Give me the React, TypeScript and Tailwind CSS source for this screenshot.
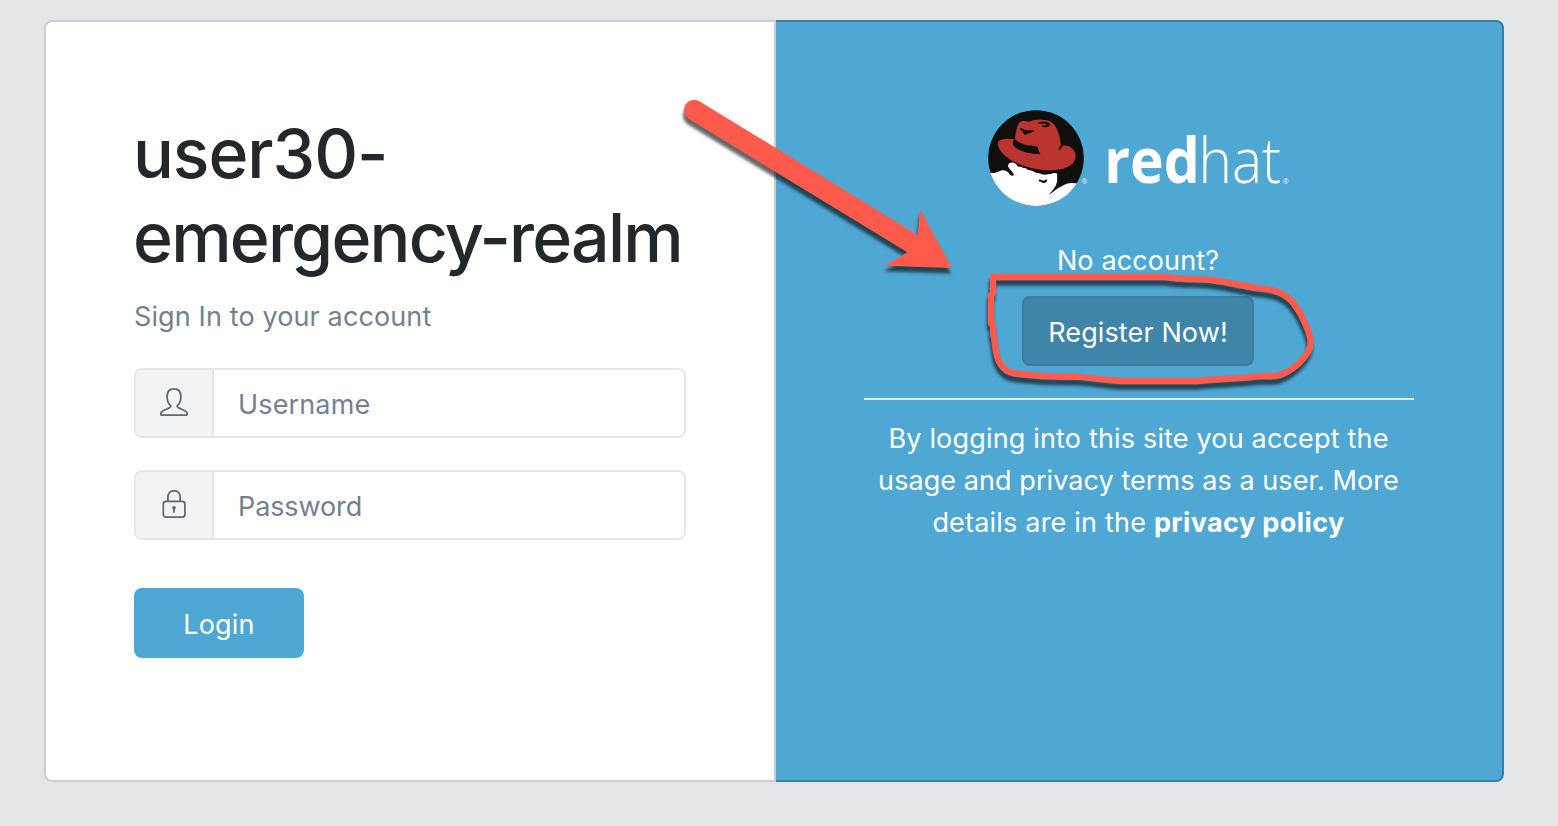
import React from "react";

function ShadowmanLogo() {
  return (
    <svg className="block h-[96px] w-[304px]" viewBox="0 0 304 96" role="img" aria-label="redhat">
      <defs>
        <clipPath id="disc">
          <circle cx="48" cy="48" r="48" />
        </clipPath>
      </defs>
      <circle cx="48" cy="48" r="47.8" fill="#110f0d" />
      <g clipPath="url(#disc)">
        <g transform="translate(-12 -10) scale(0.33333)">
          <path
            d="M36 216C46 222 60 219 70 214C80 208 88 211 97 217C100 224 104 228 112 227C116 222 108 214 101 207C93 198 96 189 105 188C113 186 121 190 124 198C129 203 134 197 140 203L150 205C156 214 166 209 174 215C183 221 190 217 197 223C208 226 218 222 226 222C232 217 239 219 244 221C242 230 245 238 243 246C240 260 232 270 218 284C238 273 242 264 255 260C268 252 276 249 287 249L320 251L320 345L30 345Z"
            fill="#fff"
          />
          <path
            d="M66 127C70 118 88 114 117 118C118 104 121 82 129 69C136 60 149 63 160 65C174 58 194 57 207 60C226 61 238 74 244 91C251 106 253 121 255 138C276 132 297 145 299 166C300 190 276 207 240 210C196 214 149 202 116 186C87 172 62 146 66 127Z"
            fill="#bb342f"
          />
          <path
            d="M115 116C124 124 134 130 147 134C161 138 174 135 184 140C188 145 186 154 194 162C165 163 137 156 120 144C109 136 108 126 115 116Z"
            fill="#110f0d"
          />
          <path d="M255 136C250 140 248 146 248 153C253 147 257 142 262 135Z" fill="#110f0d" />
          <path
            d="M131 84C138 82 142 90 150 90C160 92 169 88 176 94C168 96 165 100 156 101C151 102 149 106 144 104C145 98 135 93 131 84Z"
            fill="#110f0d"
          />
          <path
            d="M183 69C194 64 215 63 221 70C225 78 214 84 203 81C196 80 196 77 200 76C208 78 213 75 210 72C204 69 195 74 183 69Z"
            fill="#110f0d"
          />
          <path
            d="M188 239C192 237 196 240 201 242C206 243 209 237 214 239C214 245 208 249 202 249C197 249 196 244 190 245Z"
            fill="#110f0d"
          />
        </g>
      </g>
      <text x="93.4" y="74" fill="#e3f2f9" fontSize="7" fontFamily="Open Sans, sans-serif">®</text>
      <g fill="#fff" fontFamily="Open Sans, sans-serif" fontSize="62.5">
        <text x="116.2" y="73.2" fontWeight="700" textLength="95.5" lengthAdjust="spacingAndGlyphs">red</text>
        <text x="210.4" y="73.2" fontWeight="300" textLength="82.6" lengthAdjust="spacingAndGlyphs">hat</text>
      </g>
      <text x="295" y="74" fill="#e3f2f9" fontSize="6.5" fontFamily="Open Sans, sans-serif">®</text>
    </svg>
  );
}

function UserIcon() {
  return (
    <svg className="h-7 w-7" viewBox="0 0 28 28" fill="none" stroke="#5c6873" strokeWidth="1.75" strokeLinejoin="round">
      <path d="M10.9 17.9C8.2 15.6 7.1 12.6 7.1 8.4C7.1 3.7 9.8.9 14 .9s6.9 2.8 6.9 7.5c0 4.2-1.1 7.2-3.8 9.5c.3 1.8 2 2.3 4.5 3.3c3.9 1.5 5.5 2.2 5.6 4.2v.7c0 .7-.4 1.1-1.1 1.1H1.9c-.7 0-1.1-.4-1.1-1.1v-.7c.1-2 1.7-2.7 5.6-4.2c2.5-1 4.2-1.5 4.5-3.3Z" />
    </svg>
  );
}

function LockIcon() {
  return (
    <svg className="h-7 w-7" viewBox="0 0 28 28" fill="none" stroke="#5c6873" strokeWidth="1.75">
      <rect x="3.3" y="11.3" width="21.6" height="15.9" rx="2.6" />
      <path d="M7.9 11.3V6.9C7.9 3.2 10.5.8 14 .8s6.1 2.4 6.1 6.1v4.4" />
      <circle cx="14" cy="17.8" r="1.8" fill="#5c6873" stroke="none" />
      <path d="M14 18v4.7" strokeWidth="1.8" />
    </svg>
  );
}

interface FieldProps {
  icon: React.ReactNode;
  label: string;
  type: string;
  tracking: string;
}

function Field({ icon, label, type, tracking }: FieldProps) {
  return (
    <div className="flex h-[70px] overflow-hidden rounded-lg border-2 border-[#e4e7ea]">
      <div className="flex w-[78px] shrink-0 items-center justify-center border-r-2 border-[#e4e7ea] bg-[#f1f3f5] pb-[2px]">
        {icon}
      </div>
      <input
        type={type}
        placeholder={label}
        className={`min-w-0 flex-1 bg-white px-6 pt-1 text-[27px] outline-none placeholder:text-[#73818f] ${tracking}`}
      />
    </div>
  );
}

function Annotations() {
  return (
    <svg className="pointer-events-none absolute left-0 top-0 h-[826px] w-[1558px]" viewBox="0 0 1558 826" aria-hidden="true">
      <defs>
        <filter id="shade" filterUnits="userSpaceOnUse" x="650" y="70" width="700" height="350" colorInterpolationFilters="sRGB">
          <feDropShadow dx="-1" dy="5.5" stdDeviation="1.8" floodColor="#000" floodOpacity="0.6" />
        </filter>
      </defs>
      <g filter="url(#shade)">
        <path
          d="M699.8 101.4L917.7 235L920 209L952 268L885 265.7L907.3 252.3L688.7 118.8A10.2 10.2 0 0 1 699.8 101.4Z"
          fill="#ff5a4c"
        />
      </g>
      <g filter="url(#shade)">
        <g transform="translate(980 240) scale(0.33333)" fill="none" stroke="#ff5a4c" strokeWidth="19" strokeLinejoin="round" strokeLinecap="round">
          <path d="M39 160V111H550C573 111 580 116 603 116C630 118 655 117 692 120C740 125 765 133 792 137C824 146 848 145 877 151C930 163 946 198 961 221C977 253 992 282 992 307C992 329 982 341 970 356C953 376 926 396 899 406C880 412 855 406 825 410C770 418 700 416 651 423H425C380 420 330 413 286 410C255 411 220 409 182 408C150 405 130 404 98 399C60 389 49 352 46 322C43 302 44 292 39 285V255L33 250V165L39 160" />
        </g>
      </g>
    </svg>
  );
}

export default function App() {
  return (
    <div className="relative h-[826px] w-[1558px] overflow-hidden bg-[#e4e5e6] px-[44px] pt-[20px] font-['Inter',sans-serif] text-[27px] leading-[42px] text-[#23282c]">
      <main className="flex h-[762px] w-[1460px]">
        <section className="w-[732px] shrink-0 rounded-l-lg border-2 border-[#c8ced3] bg-white px-[88px] pt-[89px]">
          <h1 className="-ml-px mb-[17px] text-[68px] font-medium leading-[84px]">
            <span className="block tracking-[-1.05px]">user30-</span>
            <span className="block whitespace-nowrap tracking-[-1.8px]">emergency-realm</span>
          </h1>
          <p className="mb-[30px] tracking-[0.12px] text-[#73818f]">Sign In to your account</p>
          <form className="flex flex-col gap-8" onSubmit={(e) => e.preventDefault()}>
            <Field icon={<UserIcon />} label="Username" type="text" tracking="tracking-[0.15px]" />
            <Field icon={<LockIcon />} label="Password" type="password" tracking="tracking-[-0.1px]" />
            <button className="mt-4 h-[70px] w-[170px] rounded-lg bg-[#4fa7d4] pt-1 tracking-[0.15px] text-white">Login</button>
          </form>
        </section>
        <section className="flex flex-1 flex-col items-center rounded-r-lg border-2 border-l-0 border-[#3c7ea1] bg-[#4fa7d4] pt-[88px] text-center text-white">
          <div className="ml-[2px] w-[304px]">
            <ShadowmanLogo />
          </div>
          <p className="mr-[2px] mt-[34px] tracking-[0.12px]">No account?</p>
          <button className="mr-[2px] mt-[14px] h-[70px] w-[232px] rounded-lg border-2 border-[#3b7b9e] bg-[#3f84a9] pt-1 tracking-[0.12px]">
            Register Now!
          </button>
          <hr className="mt-8 w-[550px] border-0 border-t-2 border-[#e4e7ea]" />
          <p className="mr-px mt-[18px] whitespace-nowrap">
            <span className="block tracking-[0.17px]">By logging into this site you accept the</span>
            <span className="block tracking-[0.07px]">usage and privacy terms as a user. More</span>
            <span className="block tracking-[0.2px]">
              details are in the <b className="font-bold tracking-[0.4px]">privacy policy</b>
            </span>
          </p>
        </section>
      </main>
      <Annotations />
    </div>
  );
}
